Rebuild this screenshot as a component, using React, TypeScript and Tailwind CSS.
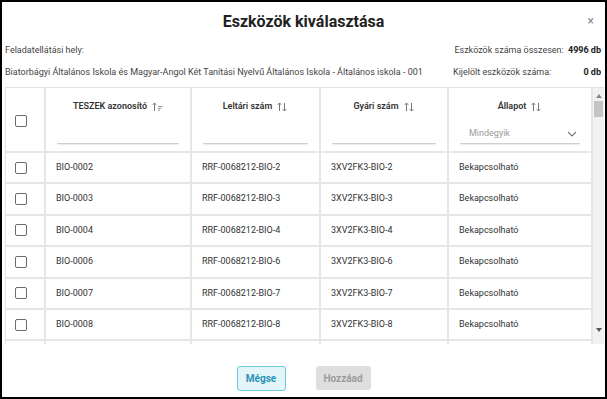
import React from "react"

const rows = [
  ["BIO-0002", "RRF-0068212-BIO-2", "3XV2FK3-BIO-2"],
  ["BIO-0003", "RRF-0068212-BIO-3", "3XV2FK3-BIO-3"],
  ["BIO-0004", "RRF-0068212-BIO-4", "3XV2FK3-BIO-4"],
  ["BIO-0006", "RRF-0068212-BIO-6", "3XV2FK3-BIO-6"],
  ["BIO-0007", "RRF-0068212-BIO-7", "3XV2FK3-BIO-7"],
  ["BIO-0008", "RRF-0068212-BIO-8", "3XV2FK3-BIO-8"],
]

const cols = "grid grid-cols-[40px_146px_129px_128px_144px]"
const cell = "border-r-2 border-[#e6e6e6]"

const SortIcon = ({ active }: { active?: boolean }) => (
  <svg width="11" height="10" viewBox="0 0 11 10" className="ml-[5px] inline-block" fill="none" stroke="#777" strokeWidth="1">
    <path d="M2.5 9V1M0.8 2.8L2.5 1L4.2 2.8" />
    {active ? (
      <g stroke="#999">
        <path d="M6 4.5h4.5M6 6.3h3.3M6 8.1h2" />
      </g>
    ) : (
      <path d="M7.5 1v8M5.8 7.2L7.5 9L9.2 7.2" />
    )}
  </svg>
)

const Checkbox = () => (
  <span className="block w-[12px] h-[12px] border-[1.5px] border-[#6b6b6b] rounded-[2px] bg-white" />
)

const Underline = () => <div className="mx-[11px] h-[2px] rounded-full border-b border-[#cfcfcf] shadow-[0_1px_1px_rgba(0,0,0,0.08)]" />

export default function App() {
  return (
    <div className="w-[607px] h-[399px] border-2 border-black bg-white text-[#333] overflow-hidden flex flex-col" style={{ fontFamily: "Roboto, 'Liberation Sans', sans-serif" }}>
      <div className="relative h-[38px] flex items-center justify-center">
        <h1 className="text-[16px] font-bold text-[#222] mt-[1px]">Eszközök kiválasztása</h1>
        <span className="absolute right-[11px] top-[10px] text-[12px] text-[#888]">×</span>
      </div>

      <div className="pl-[3px] pr-[4px] text-[9px] text-[#444]">
        <div className="flex justify-between items-center h-[22px]">
          <span>Feladatellátási hely:</span>
          <span>
            Eszközök száma összesen: <b className="ml-[2px] text-[#222]">4996 db</b>
          </span>
        </div>
        <div className="flex justify-between items-center h-[22px]">
          <span>Biatorbágyi Általános Iskola és Magyar-Angol Két Tanítási Nyelvű Általános Iskola - Általános iskola - 001</span>
          <span className="flex w-[148px] justify-between">
            <span>Kijelölt eszközök száma:</span>
            <b className="text-[#222]">0 db</b>
          </span>
        </div>
      </div>

      <div className="ml-[3px] mt-[3px] w-[599px] h-[257px] border-t border-l border-[#e2e2e2] flex overflow-hidden text-[9px]">
        <div className="w-[587px] flex flex-col">
          <div className={`${cols} h-[65px] border-b-2 border-[#e6e6e6]`}>
            <div className={`flex items-center pl-[9px] ${cell}`}>
              <Checkbox />
            </div>
            {[
              ["TESZEK azonosító", true],
              ["Leltári szám", false],
              ["Gyári szám", false],
            ].map(([t, a]) => (
              <div key={t as string} className={`flex flex-col ${cell}`}>
                <div className="h-[38px] flex items-center justify-center font-semibold text-[#333]">
                  {t as string}
                  <SortIcon active={a as boolean} />
                </div>
                <div className="flex-1" />
                <Underline />
                <div className="h-[9px]" />
              </div>
            ))}
            <div className={`flex flex-col ${cell}`}>
              <div className="h-[38px] flex items-center justify-center font-semibold text-[#333]">
                Állapot
                <SortIcon />
              </div>
              <div className="flex items-center justify-between pl-[20px] pr-[14px] text-[#9a9a9a] h-[16px]">
                <span>Mindegyik</span>
                <svg width="10" height="6" viewBox="0 0 10 6" fill="none" stroke="#777" strokeWidth="1.1">
                  <path d="M1 1l4 4 4-4" />
                </svg>
              </div>
              <div className="flex-1" />
              <Underline />
              <div className="h-[9px]" />
            </div>
          </div>
          {rows.map((r) => (
            <div key={r[0]} className={`${cols} h-[31.4px] shrink-0 border-b-2 border-[#e6e6e6]`}>
              <div className={`flex items-center pl-[9px] ${cell}`}>
                <Checkbox />
              </div>
              {r.map((c) => (
                <div key={c} className={`flex items-center pl-[10px] ${cell}`}>
                  {c}
                </div>
              ))}
              <div className={`flex items-center pl-[10px] ${cell}`}>Bekapcsolható</div>
            </div>
          ))}
          <div className={`${cols} h-[31.4px] shrink-0`}>
            <div className={cell} />
            <div className={cell} />
            <div className={cell} />
            <div className={cell} />
            <div className={cell} />
          </div>
        </div>
        <div className="w-[12px] bg-[#f1f1f1] flex flex-col items-center">
          <svg width="6" height="4" viewBox="0 0 6 4" className="mt-[6px]"><path d="M0 4L3 0L6 4Z" fill="#888" /></svg>
          <div className="mt-[3px] w-[9px] h-[16px] bg-[#c4c4c4]" />
          <div className="flex-1" />
          <svg width="6" height="4" viewBox="0 0 6 4" className="mb-[12px]"><path d="M0 0L3 4L6 0Z" fill="#555" /></svg>
        </div>
      </div>

      <div className="flex justify-center gap-[30px] mt-[22px] text-[10px] font-bold">
        <button className="w-[49px] h-[25px] rounded-[3px] border-[1.5px] border-[#6ccbe3] bg-[#e4f5fa] text-[#2b93b5]">Mégse</button>
        <button className="w-[55px] h-[24px] rounded-[3px] bg-[#dedede] text-[#9c9c9c]">Hozzáad</button>
      </div>
    </div>
  )
}
